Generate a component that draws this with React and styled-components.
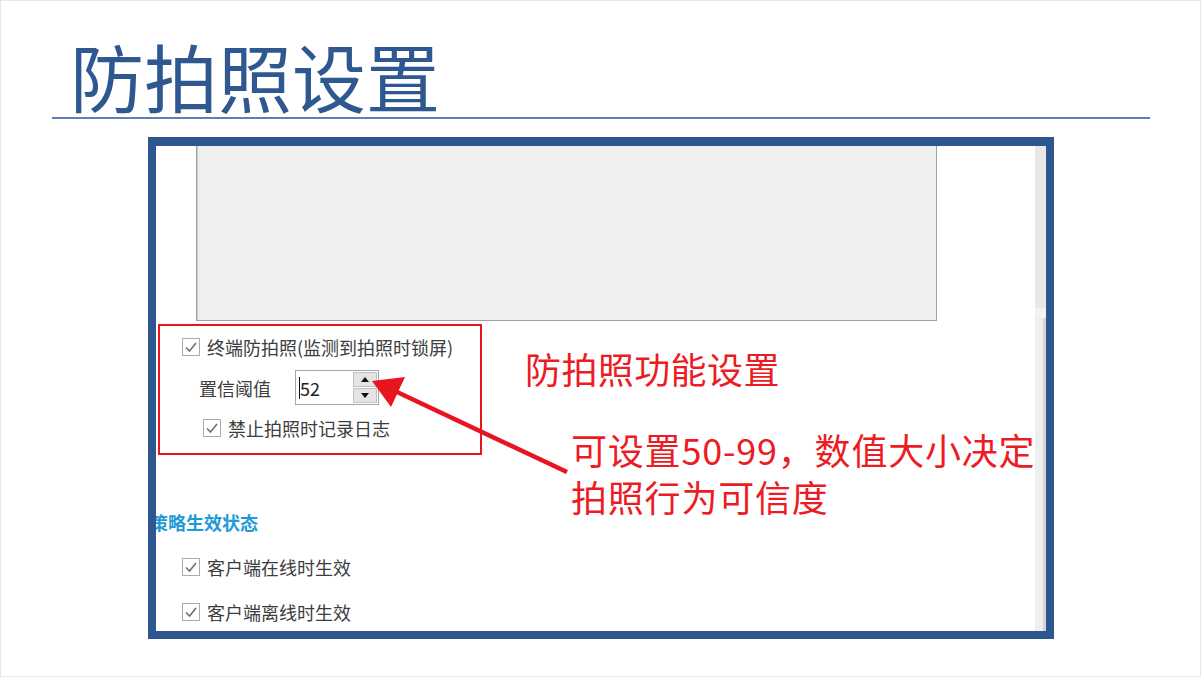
import React from 'react';
import styled, { createGlobalStyle } from 'styled-components';

const GlobalStyle = createGlobalStyle`
  html, body {
    margin: 0;
    padding: 0;
    background: #ffffff;
  }
  body {
    font-family: 'Noto Sans CJK SC', 'Noto Sans', sans-serif;
  }
`;

const Slide = styled.div`
  position: relative;
  width: 1201px;
  height: 677px;
  background: #ffffff;
  box-shadow: inset 0 0 0 1px #e4e7ee;
  overflow: hidden;
  display: flex;
  flex-direction: column;
`;

const Header = styled.div`
  margin-left: 52px;
  width: 1098px;
  padding: 38px 0 5px 18px;
  box-sizing: border-box;
  border-bottom: 2px solid #5f80b0;
`;

const Title = styled.h1`
  margin: 0;
  font-size: 74px;
  line-height: 74px;
  font-weight: 400;
  color: #2f5890;
`;

const Frame = styled.div`
  margin: 18px 0 0 148px;
  width: 906px;
  height: 502px;
  box-sizing: border-box;
  border: 8px solid #2e5790;
  border-top-width: 9px;
  display: flex;
  background: #ffffff;
`;

const Content = styled.div`
  flex: 1;
  overflow: hidden;
  display: flex;
  flex-direction: column;
`;

const Preview = styled.div`
  margin-left: 40px;
  width: 741px;
  height: 175px;
  box-sizing: border-box;
  background: #efefef;
  border: 1px solid #9ea2a7;
  border-top: none;
  box-shadow: inset 1px 0 0 #c9cbce;
`;

const Group = styled.div`
  margin: 3px 0 0 2px;
  width: 324px;
  height: 131px;
  box-sizing: border-box;
  border: 2px solid #e8141f;
  padding: 6px 0 10px;
  display: flex;
  flex-direction: column;
  gap: 8px;
`;

const Row = styled.div`
  display: flex;
  align-items: center;
  height: ${p => p.$h || 30}px;
  padding-left: ${p => p.$indent || 0}px;
  gap: ${p => p.$gap || 7}px;
  margin-top: ${p => p.$mt || 0}px;
  flex-shrink: 0;
`;

const Label = styled.span`
  font-size: 18px;
  line-height: 24px;
  color: #3d3d3d;
  white-space: nowrap;
`;

const Box = styled.span`
  width: 18px;
  height: 18px;
  box-sizing: border-box;
  border: 1px solid #ababab;
  background: #ffffff;
  display: inline-flex;
  align-items: center;
  justify-content: center;
  flex-shrink: 0;
`;

const Spin = styled.div`
  width: 84px;
  height: 35px;
  box-sizing: border-box;
  border: 1px solid #a6a6a6;
  display: flex;
  align-items: center;
  padding: 1px 1px 1px 3px;
  background: #ffffff;
`;

const SpinValue = styled.span`
  flex: 1;
  display: flex;
  align-items: center;
  font-size: 18px;
  line-height: 24px;
  color: #1e1e1e;
`;

const Caret = styled.span`
  width: 1px;
  height: 22px;
  background: #111111;
`;

const SpinButtons = styled.div`
  width: 24px;
  height: 31px;
  display: flex;
  flex-direction: column;
  gap: 1px;
`;

const SpinButton = styled.span`
  flex: 1;
  background: #e4e4e4;
  border: 1px solid #c2c2c2;
  display: flex;
  align-items: center;
  justify-content: center;
`;

const Triangle = styled.span`
  width: 0;
  height: 0;
  border-left: 4px solid transparent;
  border-right: 4px solid transparent;
  ${p => (p.$up ? 'border-bottom: 5px solid #111;' : 'border-top: 5px solid #111;')}
`;

const SectionTitle = styled.div`
  margin: 55px 0 0 -6px;
  font-size: 18px;
  line-height: 24px;
  font-weight: 700;
  color: #1f9ad6;
  white-space: nowrap;
`;

const Scrollbar = styled.div`
  width: 11px;
  display: flex;
  flex-direction: column;
  background: #f3f3f3;
`;

const ScrollUpper = styled.div`
  height: 162px;
  background: #e8e8e8;
`;

const ScrollLower = styled.div`
  flex: 1;
  margin-top: 10px;
  background: #efefef;
  border-right: 3px solid #d4d4d4;
`;

const Callout = styled.div`
  position: absolute;
  left: ${p => p.$x}px;
  top: ${p => p.$y}px;
  font-size: 36px;
  line-height: 47px;
  letter-spacing: ${p => p.$ls || 0}px;
  color: #ec1b24;
  white-space: nowrap;
`;

const Arrow = styled.svg`
  position: absolute;
  left: 0;
  top: 0;
  pointer-events: none;
`;

const Check = () => (
  <Box>
    <svg width="16" height="16" viewBox="0 0 16 16">
      <polyline points="3,8.5 6.5,12 13,4" fill="none" stroke="#707070" strokeWidth="1.6" />
    </svg>
  </Box>
);

const Checkbox = ({ label, indent, mt }) => (
  <Row $indent={indent} $mt={mt}>
    <Check />
    <Label>{label}</Label>
  </Row>
);

const App = () => (
  <>
    <GlobalStyle />
    <Slide>
      <Header>
        <Title>防拍照设置</Title>
      </Header>

      <Frame>
        <Content>
          <Preview />
          <Group>
            <Checkbox label="终端防拍照(监测到拍照时锁屏)" indent={22} />
            <Row $h={35} $indent={39} $gap={24}>
              <Label>置信阈值</Label>
              <Spin>
                <SpinValue>
                  <Caret />
                  52
                </SpinValue>
                <SpinButtons>
                  <SpinButton><Triangle $up /></SpinButton>
                  <SpinButton><Triangle /></SpinButton>
                </SpinButtons>
              </Spin>
            </Row>
            <Checkbox label="禁止拍照时记录日志" indent={43} />
          </Group>

          <SectionTitle>策略生效状态</SectionTitle>
          <Checkbox label="客户端在线时生效" indent={26} mt={18} />
          <Checkbox label="客户端离线时生效" indent={26} mt={15} />
        </Content>
        <Scrollbar>
          <ScrollUpper />
          <ScrollLower />
        </Scrollbar>
      </Frame>

      <Callout $x={525} $y={345} $ls={0.4}>防拍照功能设置</Callout>
      <Callout $x={571} $y={426} $ls={0.8}>
        可设置50-99，数值大小决定
        <br />
        拍照行为可信度
      </Callout>

      <Arrow width="1201" height="677" viewBox="0 0 1201 677">
        <line x1="397" y1="392" x2="567" y2="472" stroke="#e8141f" strokeWidth="4.5" />
        <polygon points="372,381 405,377 391,407" fill="#e8141f" />
      </Arrow>
    </Slide>
  </>
);

export default App;
